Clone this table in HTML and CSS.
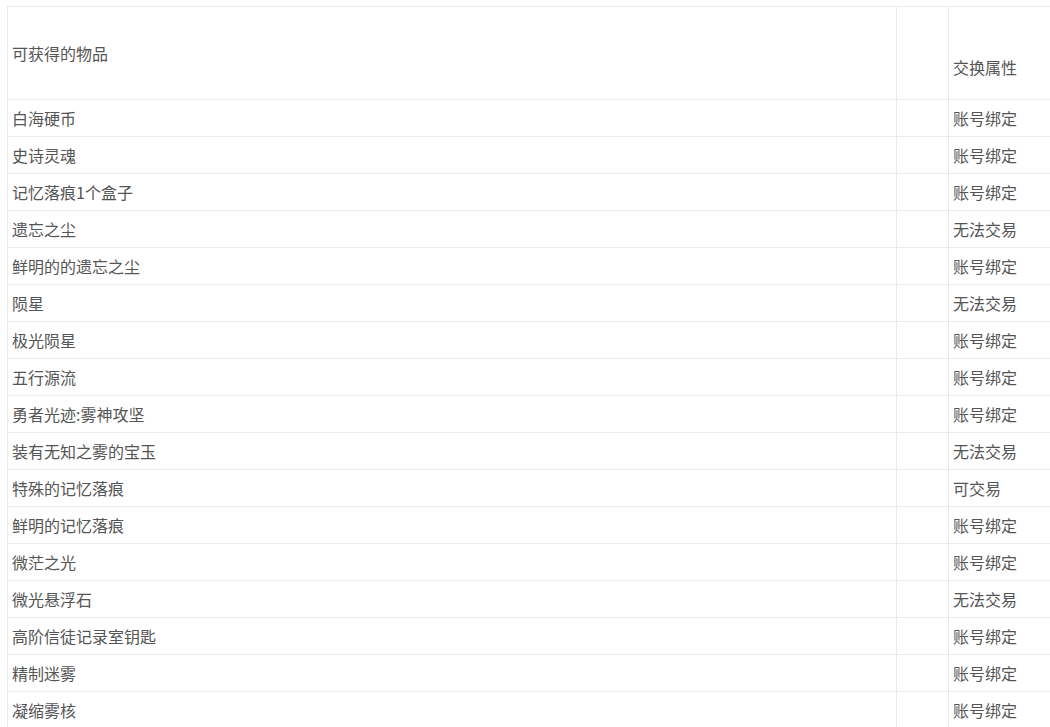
FILE: index.html
```html
<!DOCTYPE html>
<html lang="zh-CN">
<head>
<meta charset="utf-8">
<title>可获得的物品</title>
<link rel="stylesheet" href="styles.css">
</head>
<body>
<div class="frame">
<table class="items">
  <colgroup>
    <col class="col-name">
    <col class="col-icon">
    <col class="col-trade">
  </colgroup>
  <thead>
    <tr class="head-row">
      <th class="head-name">可获得的物品</th>
      <th class="head-icon"></th>
      <th class="head-trade">交换属性</th>
    </tr>
  </thead>
  <tbody>
    <tr><td>白海硬币</td><td></td><td>账号绑定</td></tr>
    <tr><td>史诗灵魂</td><td></td><td>账号绑定</td></tr>
    <tr><td>记忆落痕1个盒子</td><td></td><td>账号绑定</td></tr>
    <tr><td>遗忘之尘</td><td></td><td>无法交易</td></tr>
    <tr><td>鲜明的的遗忘之尘</td><td></td><td>账号绑定</td></tr>
    <tr><td>陨星</td><td></td><td>无法交易</td></tr>
    <tr><td>极光陨星</td><td></td><td>账号绑定</td></tr>
    <tr><td>五行源流</td><td></td><td>账号绑定</td></tr>
    <tr><td>勇者光迹:雾神攻坚</td><td></td><td>账号绑定</td></tr>
    <tr><td>装有无知之雾的宝玉</td><td></td><td>无法交易</td></tr>
    <tr><td>特殊的记忆落痕</td><td></td><td>可交易</td></tr>
    <tr><td>鲜明的记忆落痕</td><td></td><td>账号绑定</td></tr>
    <tr><td>微茫之光</td><td></td><td>账号绑定</td></tr>
    <tr><td>微光悬浮石</td><td></td><td>无法交易</td></tr>
    <tr><td>高阶信徒记录室钥匙</td><td></td><td>账号绑定</td></tr>
    <tr><td>精制迷雾</td><td></td><td>账号绑定</td></tr>
    <tr><td>凝缩雾核</td><td></td><td>账号绑定</td></tr>
  </tbody>
</table>
</div>
</body>
</html>
```

FILE: styles.css
```css
html, body {
  margin: 0;
  background: #ffffff;
}
body {
  font-family: "Noto Sans CJK SC", "Noto Sans", sans-serif;
  font-size: 16px;
  color: #555555;
}
.frame {
  width: 1050px;
  height: 727px;
  padding: 6px 0 0 7px;
  box-sizing: border-box;
  overflow: hidden;
}
.items {
  border-collapse: collapse;
  table-layout: fixed;
  width: 1150px;
}
.col-name { width: 889px; }
.col-icon { width: 52px; }
.col-trade { width: 209px; }
.items th,
.items td {
  border: 1px solid #e9ecef;
  padding: 6px 4px;
  line-height: 24px;
  font-weight: normal;
  text-align: left;
  vertical-align: middle;
}
.head-row { height: 93px; }
.items .head-trade {
  vertical-align: bottom;
  padding-bottom: 20px;
}
```
